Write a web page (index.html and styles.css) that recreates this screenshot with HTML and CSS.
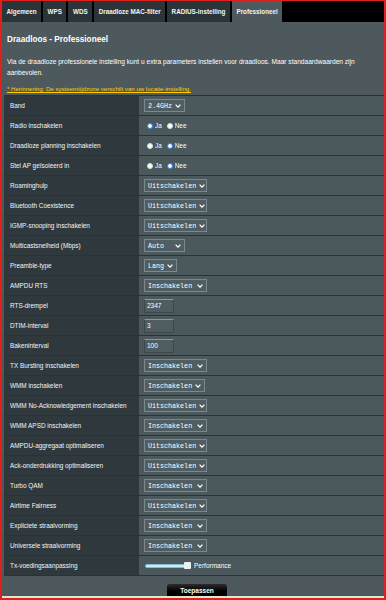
FILE: index.html
```html
<!DOCTYPE html>
<html lang="nl">
<head>
<meta charset="utf-8">
<title>Draadloos - Professioneel</title>
<link rel="stylesheet" href="styles.css">
</head>
<body>
<div class="frame">
  <nav class="tabs">
    <div class="tab">Algemeen</div>
    <div class="tab">WPS</div>
    <div class="tab">WDS</div>
    <div class="tab">Draadloze MAC-filter</div>
    <div class="tab">RADIUS-instelling</div>
    <div class="tab active">Professioneel</div>
  </nav>
  <main class="panel">
    <h1 class="title">Draadloos - Professioneel</h1>
    <div class="rule"></div>
    <p class="desc">Via de draadloze professionele instelling kunt u extra parameters instellen voor draadloos. Maar standaardwaarden zijn aanbevolen.</p>
    <p class="hint">* Herinnering: De systeemtijdzone verschilt van uw locatie-instelling.</p>
    <div class="form">
      <div class="row"><div class="label">Band</div><div class="value"><div class="sel"><span>2.4GHz</span><svg class="chev" viewBox="0 0 6 4"><path d="M0.6 0.6 L3 3.2 L5.4 0.6"/></svg></div></div></div>
      <div class="row"><div class="label">Radio inschakelen</div><div class="value"><div class="radios"><span class="opt"><span class="radio on"></span>Ja</span><span class="opt"><span class="radio"></span>Nee</span></div></div></div>
      <div class="row"><div class="label">Draadloze planning inschakelen</div><div class="value"><div class="radios"><span class="opt"><span class="radio"></span>Ja</span><span class="opt"><span class="radio on"></span>Nee</span></div></div></div>
      <div class="row"><div class="label">Stel AP geïsoleerd in</div><div class="value"><div class="radios"><span class="opt"><span class="radio"></span>Ja</span><span class="opt"><span class="radio on"></span>Nee</span></div></div></div>
      <div class="row"><div class="label">Roaminghulp</div><div class="value"><div class="sel w63"><span>Uitschakelen</span><svg class="chev" viewBox="0 0 6 4"><path d="M0.6 0.6 L3 3.2 L5.4 0.6"/></svg></div></div></div>
      <div class="row"><div class="label">Bluetooth Coexistence</div><div class="value"><div class="sel w63"><span>Uitschakelen</span><svg class="chev" viewBox="0 0 6 4"><path d="M0.6 0.6 L3 3.2 L5.4 0.6"/></svg></div></div></div>
      <div class="row"><div class="label">IGMP-snooping inschakelen</div><div class="value"><div class="sel w63"><span>Uitschakelen</span><svg class="chev" viewBox="0 0 6 4"><path d="M0.6 0.6 L3 3.2 L5.4 0.6"/></svg></div></div></div>
      <div class="row"><div class="label">Multicastsnelheid (Mbps)</div><div class="value"><div class="sel w41"><span>Auto</span><svg class="chev" viewBox="0 0 6 4"><path d="M0.6 0.6 L3 3.2 L5.4 0.6"/></svg></div></div></div>
      <div class="row"><div class="label">Preamble-type</div><div class="value"><div class="sel"><span>Lang</span><svg class="chev" viewBox="0 0 6 4"><path d="M0.6 0.6 L3 3.2 L5.4 0.6"/></svg></div></div></div>
      <div class="row"><div class="label">AMPDU RTS</div><div class="value"><div class="sel w63"><span>Inschakelen</span><svg class="chev" viewBox="0 0 6 4"><path d="M0.6 0.6 L3 3.2 L5.4 0.6"/></svg></div></div></div>
      <div class="row"><div class="label">RTS-drempel</div><div class="value"><div class="field">2347</div></div></div>
      <div class="row"><div class="label">DTIM-interval</div><div class="value"><div class="field">3</div></div></div>
      <div class="row"><div class="label">Bakeninterval</div><div class="value"><div class="field">100</div></div></div>
      <div class="row"><div class="label">TX Bursting inschakelen</div><div class="value"><div class="sel w63"><span>Inschakelen</span><svg class="chev" viewBox="0 0 6 4"><path d="M0.6 0.6 L3 3.2 L5.4 0.6"/></svg></div></div></div>
      <div class="row"><div class="label">WMM inschakelen</div><div class="value"><div class="sel"><span>Inschakelen</span><svg class="chev" viewBox="0 0 6 4"><path d="M0.6 0.6 L3 3.2 L5.4 0.6"/></svg></div></div></div>
      <div class="row"><div class="label">WMM No-Acknowledgement inschakelen</div><div class="value"><div class="sel w63"><span>Uitschakelen</span><svg class="chev" viewBox="0 0 6 4"><path d="M0.6 0.6 L3 3.2 L5.4 0.6"/></svg></div></div></div>
      <div class="row"><div class="label">WMM APSD inschakelen</div><div class="value"><div class="sel w63"><span>Inschakelen</span><svg class="chev" viewBox="0 0 6 4"><path d="M0.6 0.6 L3 3.2 L5.4 0.6"/></svg></div></div></div>
      <div class="row"><div class="label">AMPDU-aggregaat optimaliseren</div><div class="value"><div class="sel w63"><span>Uitschakelen</span><svg class="chev" viewBox="0 0 6 4"><path d="M0.6 0.6 L3 3.2 L5.4 0.6"/></svg></div></div></div>
      <div class="row"><div class="label">Ack-onderdrukking optimaliseren</div><div class="value"><div class="sel w63"><span>Uitschakelen</span><svg class="chev" viewBox="0 0 6 4"><path d="M0.6 0.6 L3 3.2 L5.4 0.6"/></svg></div></div></div>
      <div class="row"><div class="label">Turbo QAM</div><div class="value"><div class="sel w63"><span>Inschakelen</span><svg class="chev" viewBox="0 0 6 4"><path d="M0.6 0.6 L3 3.2 L5.4 0.6"/></svg></div></div></div>
      <div class="row"><div class="label">Airtime Fairness</div><div class="value"><div class="sel w63"><span>Uitschakelen</span><svg class="chev" viewBox="0 0 6 4"><path d="M0.6 0.6 L3 3.2 L5.4 0.6"/></svg></div></div></div>
      <div class="row"><div class="label">Expliciete straalvorming</div><div class="value"><div class="sel w63"><span>Inschakelen</span><svg class="chev" viewBox="0 0 6 4"><path d="M0.6 0.6 L3 3.2 L5.4 0.6"/></svg></div></div></div>
      <div class="row"><div class="label">Universele straalvorming</div><div class="value"><div class="sel w63"><span>Inschakelen</span><svg class="chev" viewBox="0 0 6 4"><path d="M0.6 0.6 L3 3.2 L5.4 0.6"/></svg></div></div></div>
      <div class="row"><div class="label">Tx-voedingsaanpassing</div><div class="value"><div class="slider"><span class="track"></span><span class="thumb"></span><span class="slider-text">Performance</span></div></div></div>
    </div>
    <div class="actions"><button class="apply" type="button">Toepassen</button></div>
  </main>
  <div class="strip"></div>
</div>
</body>
</html>
```
FILE: styles.css
```css
* { box-sizing: border-box; }
html, body {
  margin: 0;
  width: 386px;
  height: 600px;
  overflow: hidden;
  background: #e0201a;
}
.frame {
  width: 386px;
  height: 600px;
  border-style: solid;
  border-color: #e0201a;
  border-width: 1px 2px 2px 2px;
  display: flex;
  flex-direction: column;
  background: #4d595d;
  font-family: "Liberation Sans", Arial, sans-serif;
  color: #fff;
}
.tabs {
  flex: none;
  height: 21px;
  display: flex;
  gap: 2px;
  background: #000;
}
.tab {
  display: flex;
  align-items: center;
  padding: 0 4.5px;
  background: #2b3539;
  font-size: 6.3px;
  font-weight: bold;
  color: #f2f4f4;
  white-space: nowrap;
}
.tab.active { background: #4d595d; }

.panel {
  flex: none;
  height: 574px;
  padding: 11px 0 0 2px;
  overflow: hidden;
  display: flex;
  flex-direction: column;
}
.title {
  margin: 0 0 0 3px;
  height: 14px;
  line-height: 14px;
  font-size: 8.2px;
  font-weight: bold;
}
.rule {
  margin: 3px 0 0 3px;
  height: 1px;
  background: #6d7a7e;
}
.desc {
  margin: 6px 0 0 3px;
  font-size: 6.6px;
  line-height: 11px;
}
.hint {
  margin: 5px 0 0 3px;
  height: 11px;
  font-size: 6.1px;
  line-height: 11px;
  color: #ffcc00;
  text-decoration: underline;
}
.form {
  margin-top: 1px;
  border-top: 1px solid #2a3235;
}
.row {
  display: grid;
  grid-template-columns: 135px 1fr;
  height: 20px;
  border-bottom: 1px solid #2a3235;
}
.label {
  display: flex;
  align-items: center;
  padding-left: 6px;
  background: #2f393d;
  font-size: 6.4px;
  color: #f4f6f6;
  white-space: nowrap;
}
.value {
  display: flex;
  align-items: center;
  padding-left: 5px;
  background: #4b585c;
}

.sel {
  display: inline-flex;
  align-items: center;
  justify-content: space-between;
  gap: 3px;
  height: 13px;
  padding: 0 3px 0 3px;
  border: 1px solid #7b888c;
  background: #505e63;
  font-family: "Liberation Mono", "Courier New", monospace;
  font-size: 6.7px;
  color: #fff;
}
.sel.w63 { width: 63px; }
.sel.w41 { width: 41px; }
.chev {
  width: 6px;
  height: 4px;
  flex: none;
  fill: none;
  stroke: #fff;
  stroke-width: 1.2;
}

.radios {
  display: flex;
  align-items: center;
  font-size: 6.4px;
  padding-left: 3px;
}
.opt {
  display: inline-flex;
  align-items: center;
  gap: 2px;
  margin-right: 5px;
}
.radio {
  display: inline-block;
  width: 6px;
  height: 6px;
  border-radius: 50%;
  background: #fff;
  border: 1px solid #d8dcdd;
}
.radio.on {
  border: 1.6px solid #2a7fe8;
  background: #fff;
}

.field {
  display: flex;
  align-items: center;
  width: 30px;
  height: 14px;
  padding-left: 2px;
  border: 1px solid #3c484c;
  border-top-color: #8d989b;
  background: #4f5d62;
  font-size: 6.5px;
  color: #fff;
}

.slider {
  display: flex;
  align-items: center;
  padding-left: 1px;
}
.track {
  width: 41px;
  height: 4px;
  background: #c6edf8;
  border: 1px solid #86bccd;
  border-radius: 2px;
}
.thumb {
  width: 7px;
  height: 7px;
  margin-left: -2px;
  background: #edf2f4;
  border-radius: 1px;
}
.slider-text {
  margin-left: 3px;
  font-size: 6.5px;
  color: #fff;
}

.actions {
  flex: none;
  display: flex;
  justify-content: center;
  padding-top: 8px;
}
.apply {
  width: 60px;
  height: 12px;
  margin: 0 0 0 6px;
  padding: 0;
  border: 0;
  border-radius: 3px 3px 0 0;
  background: linear-gradient(#2c2c2c, #000 60%);
  color: #fff;
  font-family: "Liberation Sans", Arial, sans-serif;
  font-size: 6.5px;
  font-weight: bold;
}
.strip {
  flex: none;
  height: 2px;
  background: #dae9cf;
}
```
